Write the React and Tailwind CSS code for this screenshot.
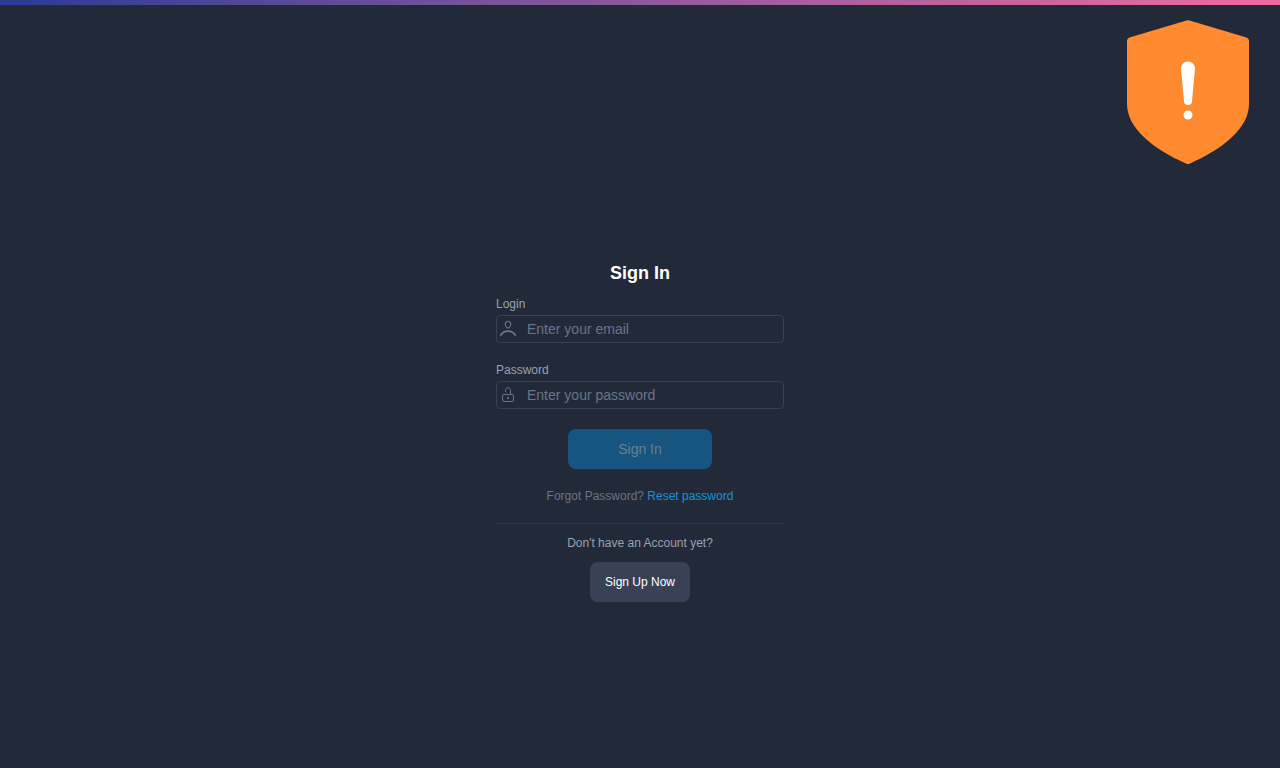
import React, { useState } from "react";

const UserIcon = () => (
    <svg viewBox="0 0 18 18" className="h-[18px] w-[18px]" fill="none" stroke="currentColor" aria-hidden="true">
        <path d="M9 1.500c1.700 0 2.700 1.100 2.700 2.600C11.700 6 10.500 8 9 8S6.300 6 6.300 4.100C6.300 2.600 7.300 1.500 9 1.500z" strokeWidth="1.200" />
        <path d="M1.700 15.200C3.400 12.500 6 11.200 9 11.200s5.600 1.300 7.300 4" strokeWidth="1.800" strokeLinecap="round" />
    </svg>
);

const LockIcon = () => (
    <svg viewBox="0 0 18 18" className="h-[18px] w-[18px]" fill="none" stroke="currentColor" aria-hidden="true">
        <rect x="3.500" y="8.500" width="11" height="7" rx="1.500" />
        <path d="M6.500 6V4.500C6.500 2.900 7.500 1.700 9 1.700s2.500 1.200 2.500 2.800v4" />
        <circle cx="9" cy="12" r="1.100" fill="currentColor" stroke="none" />
    </svg>
);

const ShieldIcon = () => (
    <svg viewBox="0 0 122 144" className="h-36 w-[122px]" aria-hidden="true">
        <path
            d="M59.500 .5q1.500-.7 3 0L119.500 17.400Q122 18.300 122 21V84C122 108 96 129 62.500 143.700q-1.500.6-3 0C26 129 0 108 0 84V21Q0 18.300 2.500 17.400z"
            fill="#ff8a30"
        />
        <path d="M54 48.500a7 7 0 0 1 14 0L65 81a4 4 0 0 1-8 0z" fill="#fff" />
        <circle cx="61" cy="95" r="4.500" fill="#fff" />
    </svg>
);

const Field = ({ id, label, icon, ...props }) => (
    <div className="flex flex-col gap-[3px]">
        <label htmlFor={id} className="text-xs text-[#99a1b3]">
            {label}
        </label>
        <div className="flex h-7 items-center rounded border border-[#374156] pl-0.5 text-[#68748a]">
            {icon}
            <input
                id={id}
                className="ml-2.5 min-w-0 flex-1 bg-transparent text-sm text-white outline-none placeholder:text-[#68748a]"
                {...props}
            />
        </div>
    </div>
);

export default function App() {
    const [email, setEmail] = useState("");
    const [password, setPassword] = useState("");

    return (
        <div className="flex min-h-screen flex-col bg-[#222a39] font-['Liberation_Sans',Arial,sans-serif]">
            <div className="h-[5px] bg-linear-to-r from-[#2b3a93] to-[#f06a9f]" />

            {/* Warning badge */}
            <div className="absolute top-5 right-[31px]">
                <ShieldIcon />
            </div>

            <main className="flex flex-1 flex-col items-center justify-center px-4 pt-22">
                <div className="w-full max-w-72">
                    <form className="flex flex-col" onSubmit={(e) => e.preventDefault()}>
                        <h1 className="mb-2.5 text-center text-lg leading-[26px] font-bold text-white">Sign In</h1>
                        <div className="flex flex-col gap-[19px]">
                            <Field
                                id="login"
                                label="Login"
                                type="email"
                                placeholder="Enter your email"
                                icon={<UserIcon />}
                                value={email}
                                onChange={(e) => setEmail(e.target.value)}
                            />
                            <Field
                                id="password"
                                label="Password"
                                type="password"
                                placeholder="Enter your password"
                                icon={<LockIcon />}
                                value={password}
                                onChange={(e) => setPassword(e.target.value)}
                            />
                        </div>
                        <button
                            type="submit"
                            disabled={!email || !password}
                            className="mt-5 h-10 w-36 self-center rounded-lg bg-[#0a8fd8] text-sm text-white disabled:bg-[#15557f] disabled:text-[#6b7f90]"
                        >
                            Sign In
                        </button>
                    </form>

                    <p className="mt-[19px] text-center text-xs text-[#6b7386]">
                        Forgot Password?{" "}
                        <a href="#reset" className="text-[#1692d8]">
                            Reset password
                        </a>
                    </p>

                    <div className="mt-[19px] flex flex-col items-center border-t border-[#2c374d] pt-[11px]">
                        <p className="text-xs text-[#99a1b3]">Don't have an Account yet?</p>
                        <button type="button" className="mt-[11px] h-10 w-25 rounded-lg bg-[#394157] text-xs text-white">
                            Sign Up Now
                        </button>
                    </div>
                </div>
            </main>
        </div>
    );
}
